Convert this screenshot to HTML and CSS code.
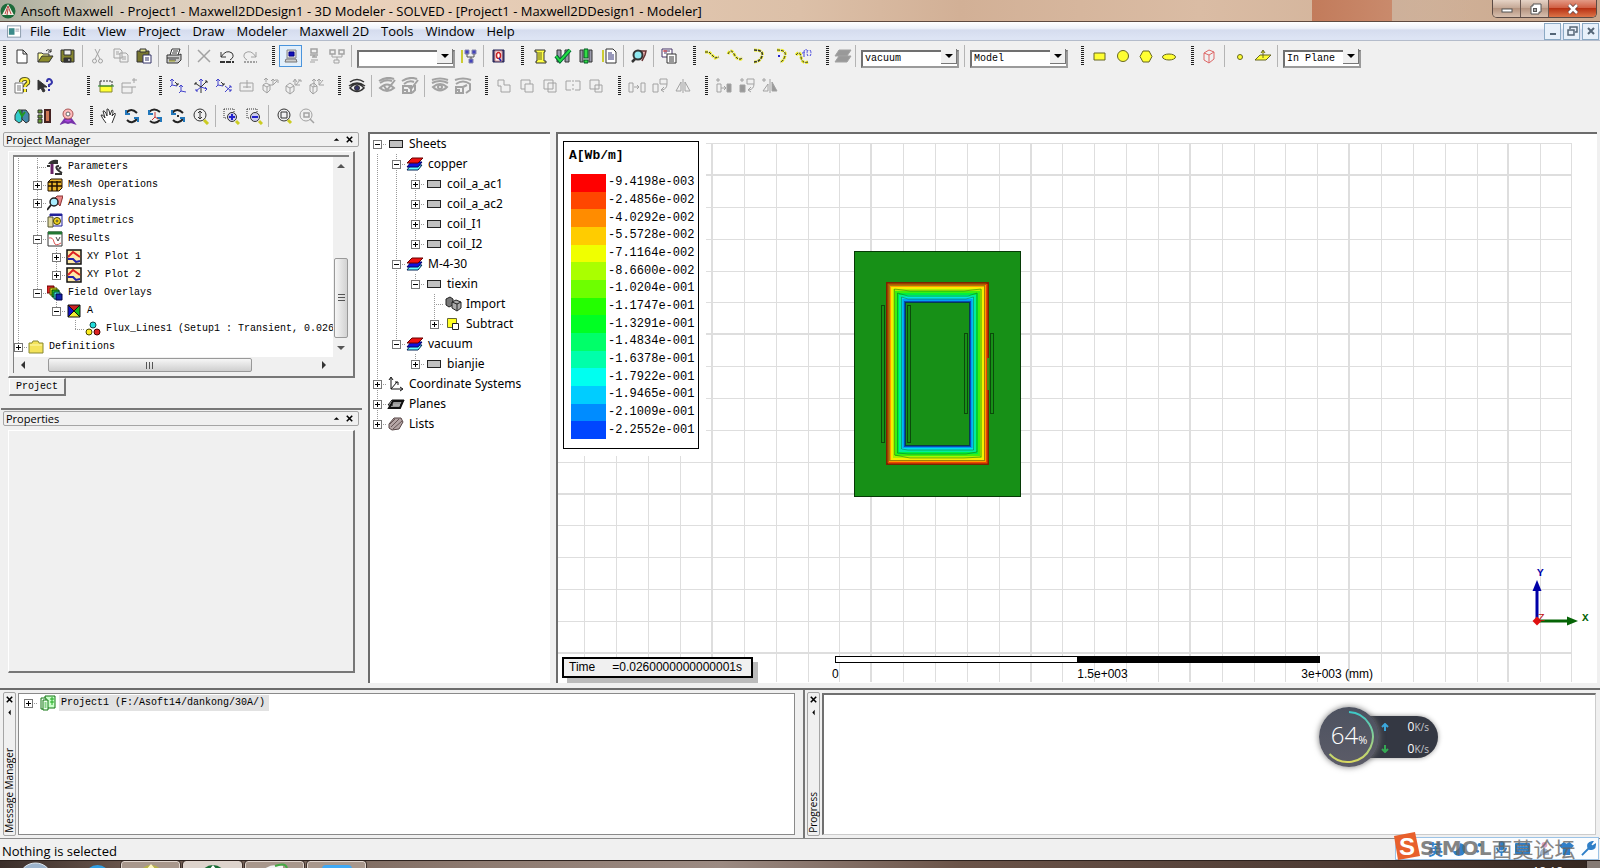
FILE: index.html
```html
<!DOCTYPE html>
<html lang="en">
<head>
<meta charset="utf-8">
<title>Ansoft Maxwell - Project1 - Maxwell2DDesign1 - 3D Modeler</title>
<link rel="stylesheet" href="styles.css">
</head>
<body>
<svg class="defs" aria-hidden="true">
  <symbol id="stack" viewBox="0 0 18 16"><path d="M1 14 5 9H16L12 14z" fill="#6ff" stroke="#025"/><path d="M1 11 5 6H16L12 11z" fill="#11d" stroke="#006"/><path d="M1 7 6 2H17L12 7z" fill="#e11" stroke="#600"/></symbol>
  <symbol id="sheet" viewBox="0 0 18 16"><rect x="2.500" y="4.500" width="13" height="7" fill="#c0c0c0" stroke="#222"/></symbol>
  <symbol id="plot" viewBox="0 0 16 16"><rect x="1" y="1" width="14" height="14" fill="#ffe9a8" stroke="#111" stroke-width="1.500"/><path d="M2 8 7 3 14 8" fill="none" stroke="#d22" stroke-width="2"/><path d="M2 10 7 10 10 13 14 12" fill="none" stroke="#22a" stroke-width="2"/></symbol>
</svg>

<header class="titlebar">
  <svg class="appicon" viewBox="0 0 16 16"><circle cx="8" cy="8" r="7.500" fill="#1c6b3a"/><path d="M8 1 14 12H2z" fill="#f4efe4"/><path d="M8 3 5 11M8 3 11 11M8 6 7 12" stroke="#b44" fill="none"/></svg>
  <h1>Ansoft Maxwell&nbsp; - Project1 - Maxwell2DDesign1 - 3D Modeler - SOLVED - [Project1 - Maxwell2DDesign1 - Modeler]</h1>
  <div class="winctl">
    <button aria-label="Minimize"><svg viewBox="0 0 16 12"><rect x="3" y="6" width="10" height="3" fill="#fff" stroke="#555"/></svg></button>
    <button aria-label="Restore"><svg viewBox="0 0 16 12"><path d="M6 1h8v8h-2v2H4V3h2z" fill="#fff" stroke="#555"/><rect x="6.500" y="5.500" width="3" height="3" fill="#aaa" stroke="#555"/></svg></button>
    <button class="close" aria-label="Close"><svg viewBox="0 0 16 12"><path d="M4 2 12 10M12 2 4 10" stroke="#644" stroke-width="4"/><path d="M4 2 12 10M12 2 4 10" stroke="#fff" stroke-width="2.500"/></svg></button>
  </div>
</header>

<nav class="menubar">
  <svg class="docicon" viewBox="0 0 16 13"><rect x=".5" y=".5" width="14" height="12" fill="#fff" stroke="#89a"/><rect x="2" y="3" width="6" height="7" fill="#3b8a8a"/><path d="M9 4h4M9 6h4" stroke="#99a"/></svg>
  <button>File</button><button>Edit</button><button>View</button><button>Project</button><button>Draw</button><button>Modeler</button><button>Maxwell 2D</button><button>Tools</button><button>Window</button><button>Help</button>
  <div class="mdictl">
    <button aria-label="Minimize child"><svg viewBox="0 0 12 12"><path d="M3 9h6" stroke="#567" stroke-width="2"/></svg></button>
    <button aria-label="Restore child"><svg viewBox="0 0 12 12"><path d="M4 4V2h7v5H9M2 5h6v5H2z" stroke="#567" stroke-width="1.500" fill="none"/></svg></button>
    <button aria-label="Close child"><svg viewBox="0 0 12 12"><path d="M3 3 9 9M9 3 3 9" stroke="#567" stroke-width="2"/></svg></button>
  </div>
</nav>

<section class="toolbars">
  <div class="row">
    <div class="group">
      <button aria-label="New"><svg viewBox="0 0 18 18"><path d="M4 3h6l4 4v9H4zM10 3v4h4" fill="#fff"/></svg></button>
      <button aria-label="Open"><svg viewBox="0 0 18 18"><path d="M2 15V6h4l1 1h6v2" fill="#ffff9a"/><path d="M2 15 6 9h11l-4 6z" fill="#8c8c2c"/><path d="M10 4q3-3 5 1M15 2v3h-3"/></svg></button>
      <button aria-label="Save"><svg viewBox="0 0 18 18"><path d="M2 3h13v12H3l-1-1z" fill="#84842e"/><path d="M5 3h7v5H5z" fill="#eee"/><path d="M5 11h7v4H5z" fill="#333"/><path d="M10 12v2" stroke="#fff"/></svg></button>
      <hr>
      <button class="off" aria-label="Cut"><svg viewBox="0 0 18 18"><path d="M6 2 11 12M11 2 6 12"/><circle cx="5.500" cy="14" r="2"/><circle cx="11.500" cy="14" r="2"/></svg></button>
      <button class="off" aria-label="Copy"><svg viewBox="0 0 18 18"><path d="M2 2h6l2 2v7H2zM4 5h3M4 7h4M8 6h6l2 2v7H8zM10 10h4M10 12h4" fill="#f0f0f0"/></svg></button>
      <button aria-label="Paste"><svg viewBox="0 0 18 18"><path d="M2 4h12v11H2z" fill="#77752f"/><path d="M5 2h6v3H5z" fill="#dd8"/><path d="M8 8h8v8H8z" fill="#fff" stroke="#336"/><path d="M10 11h4M10 13h4" stroke="#336"/></svg></button>
      <hr>
      <button aria-label="Print"><svg viewBox="0 0 18 18"><path d="M5 8 7 2h8l-2 6" fill="#fff"/><path d="M2 8h12l2-1v6l-3 3H2z" fill="#ccc"/><path d="M2 11h12M4 13h7M8 4h5M7 6h5"/><path d="M4 14h6" stroke="#aa2" /></svg></button>
      <hr>
      <button class="off" aria-label="Delete"><svg viewBox="0 0 18 18"><path d="M3 3 15 15M15 3 3 15" stroke-width="1.500"/></svg></button>
      <button aria-label="Undo"><svg viewBox="0 0 18 18"><path d="M3 5v5h5M3 10Q8 2 14 6q3 4-2 7"/><path d="M2 15h14" stroke-dasharray="5 1" stroke-width="2"/></svg></button>
      <button class="off" aria-label="Redo"><svg viewBox="0 0 18 18"><path d="M15 5v5h-5M15 10Q10 2 4 6q-3 4 2 7"/><path d="M3 15h13" stroke-dasharray="2 1" stroke-width="2"/></svg></button>
    </div>
    <div class="group">
      <button class="on" aria-label="Local machine"><svg viewBox="0 0 18 18"><path d="M5 3h9v8H5z" fill="#ddd" stroke="#888"/><path d="M7 5h5v4H7z" fill="#11b" stroke="#008"/><path d="M4 12h10l1 3H3z" fill="#ccc" stroke="#777"/></svg></button>
      <button class="off" aria-label="Remote machine"><svg viewBox="0 0 18 18"><path d="M6 2h6v4H6zM5 8h8M9 8v2M7 10h5" stroke-width="1.500"/><path d="M6 13h7M5 15h5"/></svg></button>
      <button class="off" aria-label="Distributed"><svg viewBox="0 0 18 18"><path d="M2 3h5v4H2zM11 3h5v4h-5z" stroke-width="1.500"/><path d="M4 7v3h10V7M9 10v3M6 13h5v3H6z"/></svg></button>
      <hr>
      <span class="pick"><select aria-label="Queue"><option></option></select></span>
      <button aria-label="Machine list"><svg viewBox="0 0 18 18"><path d="M2 3v13" stroke="#cc3" stroke-width="2"/><path d="M5 3h4v4H5zM12 3h4v4h-4zM9 12h4v4H9z" fill="#44b" stroke="#88a"/><path d="M7 7v3h7V7M11 10v2" stroke="#555"/></svg></button>
      <hr>
      <button aria-label="Queue monitor"><svg viewBox="0 0 18 18"><path d="M3 3h11v12H3z" fill="#447" stroke="#225"/><path d="M5 4h7v10H5z" fill="#fff" stroke="#c88"/><ellipse cx="8.500" cy="8.500" rx="2" ry="3" stroke="#c22" stroke-width="1.500"/><path d="M9 11l2 3" stroke="#22a" stroke-width="1.500"/></svg></button>
    </div>
    <div class="group">
      <button aria-label="Solution data"><svg viewBox="0 0 18 18"><path d="M4 3h10v2h-1v9h2v2H5v-2h1V5H4z" fill="#ff4"/><path d="M7 6h4M7 8h4M7 10h4M7 12h4" stroke="#662"/></svg></button>
      <button aria-label="Validate"><svg viewBox="0 0 18 18"><path d="M3 3h4v12H3zM11 3h4v12h-4z" fill="#99a"/><path d="M2 9 6 14 16 3" stroke="#063" stroke-width="4"/><path d="M2 9 6 14 16 3" stroke="#2d4" stroke-width="2"/></svg></button>
      <button aria-label="Analyze all"><svg viewBox="0 0 18 18"><path d="M3 3h3v12H3zM12 3h3v12h-3z" fill="#99a"/><path d="M7 2h4v9H7zM7 13h4v3H7z" fill="#3d4" stroke="#052"/></svg></button>
      <button aria-label="Edit notes"><svg viewBox="0 0 18 18"><path d="M3 3v12" stroke="#cc3" stroke-width="2"/><path d="M6 2h7l3 3v11H6z" fill="#fff"/><path d="M8 6h4M8 8h6M8 10h6M8 12h6" stroke="#337"/></svg></button>
      <hr>
      <button aria-label="Solve setup"><svg viewBox="0 0 18 18"><path d="M9 4h7l-1 4-3 6" fill="#f6bcbc" stroke="#633" stroke-width="1.500"/><circle cx="8" cy="8" r="4.500" fill="#8fe8f0" stroke-width="2"/><path d="M5 12 2 15" stroke-width="2.500"/></svg></button>
      <hr>
      <button aria-label="Copy image"><svg viewBox="0 0 18 18"><path d="M2 2h10v8H2zM4 4h6M4 6h3" fill="#fff" stroke="#436"/><path d="M7 7h9v9H7zM9 10h5M9 12h5M9 14h5" fill="#fff"/><path d="M3 4h4" stroke="#d33"/></svg></button>
    </div>
    <div class="group curve">
      <button aria-label="Draw line"><svg viewBox="0 0 18 18"><path class="dot" d="M2 5 6 5 12 11 16 10"/><path d="M2 5 6 5 12 11 16 10"/></svg></button>
      <button aria-label="Draw spline"><svg viewBox="0 0 18 18"><path class="dot" d="M2 7Q5 1 8 7T15 12L16 10"/><path d="M2 7Q5 1 8 7T15 12L16 10"/></svg></button>
      <button aria-label="Draw arc"><svg viewBox="0 0 18 18"><path class="dot" d="M5 3Q15 3 13 9T5 15"/><path d="M5 3Q15 3 13 9T5 15" stroke-width="1.500"/></svg></button>
      <button aria-label="Draw centre arc"><svg viewBox="0 0 18 18"><path class="dot" d="M5 3Q15 3 13 9T8 15"/><path d="M5 3Q15 3 13 9T8 15"/><path d="M6 9h2" stroke="#22c" stroke-width="2"/></svg></button>
      <button aria-label="Draw equation curve"><svg viewBox="0 0 18 18"><path class="dot" d="M1 8Q5 3 6 10T13 15"/><path d="M1 8Q5 3 6 10T13 15"/><path d="M9 10V5q0-3 3-2M7 6h4M13 3q-2 3 0 6M15 3q2 3 0 6" stroke="#44d"/></svg></button>
    </div>
    <div class="group">
      <button class="off slim" aria-label="Assign material"><svg viewBox="0 0 18 18"><path d="M1 9 5 3h12l-4 6z" fill="#999"/><path d="M1 15 5 9h12l-4 6z" fill="#999"/></svg></button>
      <hr>
      <span class="pick"><select aria-label="Material"><option>vacuum</option></select></span>
      <hr>
      <span class="pick"><select aria-label="Model type"><option>Model</option></select></span>
    </div>
    <div class="group yellow">
      <button aria-label="Rectangle"><svg viewBox="0 0 18 18"><path d="M3 6h11v7H3z"/></svg></button>
      <button aria-label="Circle"><svg viewBox="0 0 18 18"><circle cx="9" cy="9" r="5.500"/></svg></button>
      <button aria-label="Regular polygon"><svg viewBox="0 0 18 18"><path d="M6 4h6l3 5.500L12 15H6L3 9.500z"/></svg></button>
      <button aria-label="Ellipse"><svg viewBox="0 0 18 18"><ellipse cx="9" cy="10" rx="6.500" ry="3"/></svg></button>
    </div>
    <div class="group yellow">
      <button class="wire" aria-label="Region"><svg viewBox="0 0 18 18"><path d="M3 6 8 3 13 5V12L8 16 3 13zM3 6 8 8 13 5M8 8v8"/></svg></button>
      <hr>
      <button aria-label="Point"><svg viewBox="0 0 18 18"><circle cx="9" cy="10" r="2.500"/></svg></button>
      <button aria-label="Plane"><svg viewBox="0 0 18 18"><path d="M1 13 6 8h11l-5 5z"/><path d="M9 11V4M7 6l2-3 2 3"/></svg></button>
      <hr>
      <span class="pick small"><select aria-label="Movement mode"><option>In Plane</option></select></span>
    </div>
  </div>

  <div class="row">
    <div class="group">
      <button aria-label="Help topics"><svg viewBox="0 0 18 18"><path d="M2 6h8v10H2zM4 9h4M4 11h4M4 13h4" fill="#fff" stroke="#777"/><path d="M8 5q0-3 4-3t3 4q-3 2-3 4M12 12v3" stroke="#552" stroke-width="4"/><path d="M8 5q0-3 4-3t3 4q-3 2-3 4M12 12v3" stroke="#fe3" stroke-width="2"/></svg></button>
      <button aria-label="Context help"><svg viewBox="0 0 18 18"><path d="M2 3v10l3-2 2 4 2-1-2-4h4z" fill="#333"/><path d="M11 5q0-3 2-3t3 3q0 2-3 3v2M13 12v2" stroke="#33a" stroke-width="2"/></svg></button>
    </div>
    <div class="group g20">
      <button aria-label="Section"><svg viewBox="0 0 18 18"><path d="M3 4h12v5" stroke-dasharray="2 1"/><path d="M3 4v5"/><path d="M3 9h12v6H3z" fill="#ff3" stroke="#883"/><path d="M1 9h16" stroke="#282"/></svg></button>
      <button class="off" aria-label="Section add"><svg viewBox="0 0 18 18"><path d="M2 6h9M2 6v4h10v6H2v-6M14 1v5M12 3h5M12 10h4"/></svg></button>
    </div>
    <div class="group g8 blue">
      <button aria-label="Offset origin"><svg viewBox="0 0 18 18"><path d="M3 2v6M1 4l2-2 2 2M3 8l-2 2M3 8l5 1M12 8v6M10 10l2-2 2 2M12 14l-2 2M12 14l5 1"/><path d="M6 5l3 3M9 6v2H7" stroke="#333"/></svg></button>
      <button aria-label="Rotated axis"><svg viewBox="0 0 18 18"><path d="M9 2v9M7 4l2-2 2 2M9 10l-5 4M4 12v2h2M9 10l6 2M13 10l2 2-2 2"/><path d="M9 10 3 6M3 8V6h2M9 10l6-6M13 4h2v2M9 11v5" stroke="#333"/></svg></button>
      <button aria-label="Offset and rotated"><svg viewBox="0 0 18 18"><path d="M3 2v6M1 4l2-2 2 2M3 8l-2 2M3 8l5 1M10 15l6-6M14 9h2v2M10 9l6 5M14 14h2v-2"/><path d="M6 5l3 3M9 6v2H7" stroke="#333"/></svg></button>
      <button class="off" aria-label="Face axis"><svg viewBox="0 0 18 18"><path d="M2 6h13v8H2zM9 3v8M5 10h8"/></svg></button>
      <button class="off" aria-label="Object axis 1"><svg viewBox="0 0 18 18"><path d="M2 8l3-2 4 2v5l-3 3-4-3zM2 8l4 2 3-2M6 10v6M9 8h3M12 8V2M10 4l2-2 2 2M12 8l4-4M14 3h3v3M5 1v4M3 3l2-2 2 2"/></svg></button>
      <button class="off" aria-label="Object axis 2"><svg viewBox="0 0 18 18"><path d="M2 9l4-3 4 3v5l-4 3-4-3zM2 9l4 2 4-2M6 11v6M11 3v5h5M9 5l2-3 2 3M12 8l4-5M14 3h3v2"/></svg></button>
      <button class="off" aria-label="Object axis 3"><svg viewBox="0 0 18 18"><path d="M3 8l4-2 3 3v5l-4 3-3-3zM3 8l3 2 4-1M6 10v7M7 2v8M5 4l2-2 2 2M12 2v6h5M10 4l2-2 2 2M12 8l4-5"/></svg></button>
    </div>
    <div class="group">
      <button aria-label="Show all"><svg viewBox="0 0 18 18"><path d="M2 5Q9 0 16 5M1 9Q9 3 17 9M2 11Q9 3 16 11Q9 18 2 11z" stroke-width="1.500"/><circle cx="9" cy="11" r="2.500" fill="#336"/></svg></button>
      <hr>
      <button class="off bold" aria-label="Hide selection"><svg viewBox="0 0 18 18"><path d="M1 4Q9-1 16 2M2 6Q8 2 14 4M2 11Q9 4 16 11Q9 17 2 11zM6 9l3 4 8-10"/></svg></button>
      <button class="off bold" aria-label="Hide in view"><svg viewBox="0 0 18 18"><path d="M1 4Q9-1 16 2M3 7Q8 3 13 5M2 9h8v7H2zM2 13h4v3M7 9l3 3 7-9M14 8v5l-3 3"/></svg></button>
      <hr>
      <button class="off bold" aria-label="Show selection"><svg viewBox="0 0 18 18"><path d="M1 3Q9 0 17 3M1 6Q9 2 17 6M2 10Q9 4 16 10Q9 17 2 10z"/><circle cx="9" cy="10" r="2"/></svg></button>
      <button class="off bold" aria-label="Show in view"><svg viewBox="0 0 18 18"><path d="M1 3Q9 0 17 3M2 7Q9 2 16 7v6l-4 3M2 10h7v6H2zM2 13h3v3M9 10l4-2"/></svg></button>
    </div>
    <div class="group">
      <button class="off" aria-label="Unite"><svg viewBox="0 0 18 18"><path d="M3 3h6v5h6v7H6V9H3z"/></svg></button>
      <button class="off" aria-label="Subtract"><svg viewBox="0 0 18 18"><path d="M7 12H3V3h9v4M7 7h8v8H7z"/></svg></button>
      <button class="off" aria-label="Intersect"><svg viewBox="0 0 18 18"><path d="M3 3h9v9H3zM7 6h8v9H7z"/></svg></button>
      <button class="off" aria-label="Split"><svg viewBox="0 0 18 18"><path d="M7 4H2v9h5M11 4h5v9h-5"/><path d="M9 3v12" stroke-dasharray="2 2"/></svg></button>
      <button class="off" aria-label="Imprint"><svg viewBox="0 0 18 18"><path d="M3 3h9v9H3zM8 8h7v7H8z"/></svg></button>
    </div>
    <div class="group">
      <button class="off" aria-label="Move"><svg viewBox="0 0 18 18"><path d="M1 6h4v9H1zM13 6h4v9h-4zM6 10h5M9 8l2 2-2 2"/></svg></button>
      <button class="off" aria-label="Rotate"><svg viewBox="0 0 18 18"><path d="M2 7h5v8H2zM9 2h7v5H9zM16 7q0 5-5 6M13 10l-3 3 3 2"/></svg></button>
      <button class="off" aria-label="Mirror"><svg viewBox="0 0 18 18"><path d="M2 14 7 5v9zM9 2v14M11 5l5 9h-5z"/></svg></button>
    </div>
    <div class="group">
      <button class="off" aria-label="Duplicate along line"><svg viewBox="0 0 18 18"><path d="M2 7h4v8H2zM6 11h5M9 9l2 2-2 2M3 1v4M1 3h4"/><path d="M12 7h4v8h-4z" fill="#999"/></svg></button>
      <button class="off" aria-label="Duplicate around axis"><svg viewBox="0 0 18 18"><path d="M2 8h5v7H2z" fill="#999"/><path d="M9 2h7v5H9zM16 7q0 5-5 6M13 10l-3 3 3 2M4 1v4M2 3h4"/></svg></button>
      <button class="off" aria-label="Duplicate mirror"><svg viewBox="0 0 18 18"><path d="M2 14 7 7v7zM9 2v14M3 1v4M1 3h4"/><path d="M11 5l5 9h-5z" fill="#999"/></svg></button>
    </div>
  </div>

  <div class="row">
    <div class="group">
      <button aria-label="Model view"><svg viewBox="0 0 18 18"><path d="M2 8 5 3h4v11l-3 2-4-3z" fill="#3cc"/><path d="M9 3h4l3 4v7l-3 2-4-4z" fill="#48a"/><path d="M6 3l3 6 3-4" stroke="#292" stroke-width="2"/></svg></button>
      <button aria-label="Layers"><svg viewBox="0 0 18 18"><path d="M2 3h4v3H2zM2 8h4v3H2zM2 12h4v4H2z" fill="#693"/><path d="M9 3h5v12H9z" fill="#c75" stroke="#422" stroke-width="2"/></svg></button>
      <button aria-label="Camera"><svg viewBox="0 0 18 18"><path d="M3 16l3-4h6l3 4-3-1-3 1-3-1z" fill="#a4d" stroke="#73a" stroke-width="2"/><circle cx="9" cy="7" r="5" fill="#fbb" stroke="#a55"/><circle cx="9" cy="7" r="2" fill="#fff" stroke="#666"/></svg></button>
    </div>
    <div class="group">
      <button aria-label="Pan"><svg viewBox="0 0 18 18"><path d="M6 16Q2 11 1 8q2-1 4 3L3 4q2-1 4 5L7 2q2-1 3 6l2-5q2 0 0 6l3-3q1 1-1 5l-2 5" fill="#fff"/></svg></button>
      <button class="spin" aria-label="Rotate view"><svg viewBox="0 0 18 18"><path d="M3 6Q8 0 14 6M4 13q5 5 10-1"/><path d="M3 3v4h4M15 15v-4h-4" stroke="#27b"/></svg></button>
      <button class="spin" aria-label="Rotate about axis"><svg viewBox="0 0 18 18"><path d="M3 5Q8 0 14 5M4 14q5 4 10-1"/><path d="M3 3v4h4M15 15v-4h-4" stroke="#27b"/><path d="M9 5v5l-3 3M9 10l3 2" stroke="#c33" stroke-width="1"/></svg></button>
      <button class="spin" aria-label="Rotate about centre"><svg viewBox="0 0 18 18"><path d="M3 6Q8 0 14 6M4 13q5 5 10-1"/><path d="M3 3v4h4M15 15v-4h-4" stroke="#27b"/><path d="M8 9h2" stroke="#333"/></svg></button>
      <button aria-label="Zoom"><svg viewBox="0 0 18 18"><circle cx="8" cy="8" r="6"/><path d="M8 4v8M6 6l2-2 2 2M6 10l2 2 2-2"/><path d="M12 13l4 4" stroke="#cc2" stroke-width="3"/></svg></button>
      <hr>
      <button aria-label="Zoom in"><svg viewBox="0 0 18 18"><path d="M2 2h10v3M2 2v9h3" stroke-dasharray="1 1"/><circle cx="10" cy="10" r="4.500" fill="#cce"/><path d="M7 10h6M10 7v6" stroke="#22c" stroke-width="2"/><path d="M14 14l3 3" stroke="#cc2" stroke-width="3"/></svg></button>
      <button aria-label="Zoom out"><svg viewBox="0 0 18 18"><path d="M2 2h10v3M2 2v9h3" stroke-dasharray="1 1"/><circle cx="10" cy="10" r="4.500" fill="#cce"/><path d="M7 10h6" stroke="#22c" stroke-width="2"/><path d="M14 14l3 3" stroke="#cc2" stroke-width="3"/></svg></button>
      <hr>
      <button aria-label="Fit all"><svg viewBox="0 0 18 18"><circle cx="9" cy="8" r="6"/><path d="M6 5h6v6H6z"/><path d="M13 13l3 3" stroke="#cc2" stroke-width="3"/></svg></button>
      <button class="off" aria-label="Fit selection"><svg viewBox="0 0 18 18"><circle cx="8" cy="8" r="6"/><path d="M6 6h5v4H6zM12 12l4 4" stroke-width="1.500"/></svg></button>
    </div>
  </div>
</section>

<main class="workspace">
  <aside class="left">
    <section class="pane">
      <header class="caption"><h2>Project Manager</h2><button aria-label="Collapse"><svg viewBox="0 0 9 9"><path d="M1 6 4.500 3 8 6z"/></svg></button><button aria-label="Close panel"><svg viewBox="0 0 9 9"><path d="M1 1 8 8M8 1 1 8" stroke="#000" stroke-width="2"/></svg></button></header>
      <div class="raised">
        <div class="sunken">
          <ul class="tree mono">
            <li><i class="v"></i><i class="t"></i><svg viewBox="0 0 16 16"><path d="M5 5v10" stroke="#626" stroke-width="3"/><path d="M1 5Q4 0 11 1v4H1z" fill="#333"/><path d="M0 7h3M8 15h7" stroke="#333" stroke-width="2"/><path d="M12 7q-4 0-2 3l2 2 3 2M14 8l-2 2" stroke="#333" stroke-width="2" fill="none"/></svg><span>Parameters</span></li>
            <li><i class="v"></i><i class="t"><button class="ex plus" aria-label="Expand"></button></i><svg viewBox="0 0 16 16"><path d="M1 5 4 2h11v9l-3 3H1z" fill="#e9b52a" stroke="#210"/><path d="M1 9h14M5 4v10M10 4v10M1 5h13" stroke="#210" stroke-width="1.500"/></svg><span>Mesh Operations</span></li>
            <li><i class="v"></i><i class="t"><button class="ex plus" aria-label="Expand"></button></i><svg viewBox="0 0 16 16"><path d="M7 4 10 1h6l-3 10z" fill="#e88" stroke="#833"/><circle cx="7" cy="7" r="4" fill="#aef" stroke="#222" stroke-width="1.500"/><path d="M4 10 0 15" stroke="#222" stroke-width="2"/></svg><span>Analysis</span></li>
            <li><i class="v"></i><i class="t"></i><svg viewBox="0 0 16 16"><path d="M3 1h12v12H3z" fill="#eef" stroke="#229"/><path d="M3 2h12" stroke="#229" stroke-width="2"/><path d="M1 4h5v10H1z" fill="#dfd8a0" stroke="#553"/><circle cx="10" cy="8" r="3.500" fill="#fd2" stroke="#440"/><circle cx="10" cy="8" r="1" fill="#fff" stroke="#440"/></svg><span>Optimetrics</span></li>
            <li><i class="v"></i><i class="t"><button class="ex" aria-label="Collapse"></button></i><svg viewBox="0 0 16 16"><path d="M1 1h14v14H1z" fill="#fff" stroke="#333"/><path d="M1 2h14" stroke="#273" stroke-width="3"/><path d="M2 7q4-1 5 4t7 1" stroke="#d55" fill="none"/><path d="M9 6l2 4 2-4" stroke="#444" fill="none"/></svg><span>Results</span></li>
            <li><i class="v"></i><i class="v"></i><i class="t"><button class="ex plus" aria-label="Expand"></button></i><svg><use href="#plot"/></svg><span>XY Plot 1</span></li>
            <li><i class="v"></i><i class="v"></i><i class="l"><button class="ex plus" aria-label="Expand"></button></i><svg><use href="#plot"/></svg><span>XY Plot 2</span></li>
            <li><i class="v"></i><i class="l"><button class="ex" aria-label="Collapse"></button></i><svg viewBox="0 0 16 16"><path d="M0 1h7v7H0z" fill="#d22" stroke="#600"/><path d="M3 3h7v7H3z" fill="#dd2" stroke="#550"/><path d="M5 5h7v7H5z" fill="#2b2" stroke="#040"/><path d="M7 7h6v7H7z" fill="#4dd" stroke="#044"/><path d="M9 9h6v6H9z" fill="#12a" stroke="#004"/></svg><span>Field Overlays</span></li>
            <li><i class="v"></i><i></i><i class="l"><button class="ex" aria-label="Collapse"></button></i><svg viewBox="0 0 16 16"><path d="M2 2h12L8 8z" fill="#c22"/><path d="M2 2v12l6-6z" fill="#11c"/><path d="M14 2v12L8 8z" fill="#1b2"/><path d="M2 14h12L8 8z" fill="#ee3"/><path d="M2 2h12v12H2zM2 2l12 12M14 2 2 14" stroke="#111" fill="none"/></svg><span>A</span></li>
            <li><i class="v"></i><i></i><i></i><i class="l"></i><svg viewBox="0 0 16 16"><circle cx="8" cy="4" r="3" fill="#2dd" stroke="#144"/><circle cx="4" cy="11" r="3" fill="#fe2" stroke="#440"/><circle cx="12" cy="11" r="3" fill="#d22" stroke="#400"/></svg><span>Flux_Lines1 (Setup1 : Transient, 0.026</span></li>
            <li><i class="l"><button class="ex plus" aria-label="Expand"></button></i><svg viewBox="0 0 16 16"><path d="M1 4h3l1-2h5l1 2h4v10H1z" fill="#f4e35a" stroke="#883"/><path d="M2 6h12" stroke="#fffbb0"/></svg><span>Definitions</span></li>
          </ul>
          <div class="vbar"><b class="up"></b><b class="thumb"></b><b class="down"></b></div>
          <div class="hbar"><b class="lf"></b><b class="thumb"></b><b class="rt"></b></div>
        </div>
      </div>
      <button class="tab">Project</button>
    </section>
    <section class="pane props">
      <header class="caption"><h2>Properties</h2><button aria-label="Collapse"><svg viewBox="0 0 9 9"><path d="M1 6 4.500 3 8 6z"/></svg></button><button aria-label="Close panel"><svg viewBox="0 0 9 9"><path d="M1 1 8 8M8 1 1 8" stroke="#000" stroke-width="2"/></svg></button></header>
      <div class="raised"></div>
    </section>
  </aside>

  <section class="model">
    <ul class="tree sans">
      <li><i class="first"><button class="ex" aria-label="Collapse"></button></i><svg><use href="#sheet"/></svg><span>Sheets</span></li>
      <li><i class="v"></i><i class="t"><button class="ex" aria-label="Collapse"></button></i><svg><use href="#stack"/></svg><span>copper</span></li>
      <li><i class="v"></i><i class="v"></i><i class="t"><button class="ex plus" aria-label="Expand"></button></i><svg><use href="#sheet"/></svg><span>coil_a_ac1</span></li>
      <li><i class="v"></i><i class="v"></i><i class="t"><button class="ex plus" aria-label="Expand"></button></i><svg><use href="#sheet"/></svg><span>coil_a_ac2</span></li>
      <li><i class="v"></i><i class="v"></i><i class="t"><button class="ex plus" aria-label="Expand"></button></i><svg><use href="#sheet"/></svg><span>coil_I1</span></li>
      <li><i class="v"></i><i class="v"></i><i class="l"><button class="ex plus" aria-label="Expand"></button></i><svg><use href="#sheet"/></svg><span>coil_I2</span></li>
      <li><i class="v"></i><i class="t"><button class="ex" aria-label="Collapse"></button></i><svg><use href="#stack"/></svg><span>M-4-30</span></li>
      <li><i class="v"></i><i class="v"></i><i class="l"><button class="ex" aria-label="Collapse"></button></i><svg><use href="#sheet"/></svg><span>tiexin</span></li>
      <li><i class="v"></i><i class="v"></i><i></i><i class="t"></i><svg viewBox="0 0 18 16"><path d="M2 3 6 1l3 2v6l-4 2-3-2z" fill="#777" stroke="#222"/><path d="M8 6l4-2 5 2v6l-4 3-5-3z" fill="#aaa" stroke="#222"/><path d="M8 6l5 2 4-2M13 8v6" stroke="#222" fill="none"/></svg><span>Import</span></li>
      <li><i class="v"></i><i class="v"></i><i></i><i class="l"><button class="ex plus" aria-label="Expand"></button></i><svg viewBox="0 0 18 16"><path d="M3.500 2.500h9v9h-9z" fill="#ff2" stroke="#663"/><path d="M8.500 7.500h6v6h-6z" fill="#fff" stroke="#222"/></svg><span>Subtract</span></li>
      <li><i class="v"></i><i class="l"><button class="ex" aria-label="Collapse"></button></i><svg><use href="#stack"/></svg><span>vacuum</span></li>
      <li><i class="v"></i><i></i><i class="l"><button class="ex plus" aria-label="Expand"></button></i><svg><use href="#sheet"/></svg><span>bianjie</span></li>
      <li><i class="t"><button class="ex plus" aria-label="Expand"></button></i><svg viewBox="0 0 18 16"><path d="M4 2v11h11M4 13l6-7M2 4l2-3 2 3M13 11l3 2-3 2M8 6h3v3" fill="none" stroke="#111"/></svg><span>Coordinate Systems</span></li>
      <li><i class="t"><button class="ex plus" aria-label="Expand"></button></i><svg viewBox="0 0 18 16"><path d="M2 12 6 5h10l-3 7z" fill="#999" stroke="#111" stroke-width="2"/><path d="M1 9 5 4h12l-3 5z" fill="none" stroke="#111"/><path d="M6 9h7" stroke="#fff"/></svg><span>Planes</span></li>
      <li><i class="l"><button class="ex plus" aria-label="Expand"></button></i><svg viewBox="0 0 18 16"><path d="M2 8 7 2 14 2 16 6 12 13 5 14 2 12z" fill="#b5a5a5" stroke="#544"/><path d="M4 11 12 3M6 13 15 5M3 8 8 3" stroke="#655"/></svg><span>Lists</span></li>
    </ul>
  </section>

  <section class="viewport">
    <svg class="scene" aria-label="Flux line plot">
      <g transform="translate(-558 -134)" fill="none">
        <path stroke="#dedede" d="M584.500 143V682M616.500 143V682M648.500 143V682M680.500 143V682M744.500 143V682M776.500 143V682M808.500 143V682M839.500 143V682M903.500 143V682M935.500 143V682M967.500 143V682M999.500 143V682M1062.500 143V682M1094.500 143V682M1126.500 143V682M1158.500 143V682M1222.500 143V682M1254.500 143V682M1285.500 143V682M1317.500 143V682M1381.500 143V682M1413.500 143V682M1445.500 143V682M1477.500 143V682M1540.500 143V682M1571.500 143V682"/>
        <path stroke="#dedede" d="M558 143.500H1571M558 207.500H1571M558 239.500H1571M558 271.500H1571M558 302.500H1571M558 366.500H1571M558 398.500H1571M558 430.500H1571M558 462.500H1571M558 525.500H1571M558 557.500H1571M558 589.500H1571M558 621.500H1571"/>
        <path stroke="#dedede" stroke-width="2" d="M712 143V682M871 143V682M1031 143V682M1190 143V682M1349 143V682M1508 143V682M558 175H1571M558 334H1571M558 494H1571M558 653H1571"/>
        <path fill="#fff" d="M558 134H706V456H558z"/>
        <rect x="854.500" y="251.500" width="166" height="245" fill="#179017" stroke="#063a06"/>
        <g stroke="#0b4a0b"><rect x="881.500" y="305.500" width="3" height="137"/><rect x="907.500" y="305.500" width="3" height="137"/><rect x="964.500" y="333.500" width="3" height="80"/><rect x="990.500" y="333.500" width="3" height="80"/></g>
        <g stroke-width="2">
          <rect x="887" y="283" width="101" height="181" stroke="#7c2400"/>
          <path d="M888.500 463V284.500H986.500" stroke="#b05a00"/><path d="M986.500 284V462.500H888" stroke="#f04400"/>
          <rect x="890" y="286" width="95" height="175" stroke="#ff9c00"/>
          <rect x="892" y="288" width="91" height="171" stroke="#f4ee00"/>
          <rect x="894" y="290" width="87" height="167" stroke="#a8f400"/>
          <rect x="896" y="292" width="83" height="163" stroke="#3cf010"/>
          <rect x="898" y="294" width="79" height="159" stroke="#00f040"/>
          <rect x="900" y="296" width="75" height="155" stroke="#00ee9c"/>
          <rect x="902" y="298" width="71" height="151" stroke="#00e0e8"/>
          <rect x="903.500" y="300" width="68" height="147" stroke="#00a0f4"/>
          <rect x="905" y="302" width="65" height="144" stroke="#0a4cb4"/>
        </g>
        <path d="M894.500 455V289L910 291H964L981 289V457L964 458H910zM897.500 453V293L908 296H968L977 293V452L966 454H908zM901.500 449V297L908 299H966L973.500 297V450H908z" stroke="#135a10" stroke-opacity=".45"/>
        <rect x="889.500" y="285.500" width="95" height="175" stroke="#135a10" stroke-opacity=".4"/>
        <rect x="905.500" y="302.500" width="64" height="143" stroke="#063a50"/>
        <path d="M988 358V390" stroke="#4a8a10" stroke-width="2"/>
      </g>
    </svg>
    <div class="legend">
      <h3>A[Wb/m]</h3>
      <ol>
        <li class="c1">-9.4198e-003</li><li class="c2">-2.4856e-002</li><li class="c3">-4.0292e-002</li><li class="c4">-5.5728e-002</li><li class="c5">-7.1164e-002</li><li class="c6">-8.6600e-002</li><li class="c7">-1.0204e-001</li><li class="c8">-1.1747e-001</li><li class="c9">-1.3291e-001</li><li class="c10">-1.4834e-001</li><li class="c11">-1.6378e-001</li><li class="c12">-1.7922e-001</li><li class="c13">-1.9465e-001</li><li class="c14">-2.1009e-001</li><li class="c15">-2.2552e-001</li>
      </ol>
    </div>
    <div class="time"><span>Time</span><span>=0.0260000000000001s</span></div>
    <div class="scale"><div class="bar"></div><div class="ticks"><span>0</span><span>1.5e+003</span><span>3e+003 (mm)</span></div></div>
    <svg class="triad" viewBox="0 0 64 68"><path d="M12 54V20" stroke="#0000a8" stroke-width="3"/><path d="M12 13 16.500 24H7.500z" fill="#0000a8"/><path d="M12 54H44" stroke="#066406" stroke-width="3"/><path d="M53 54 42 49.500V58.500z" fill="#066406"/><path d="M12 49.500 16.500 54 12 58.500 7.500 54z" fill="#e01010"/><text x="12" y="9" fill="#0000a8">Y</text><text x="57" y="54" fill="#066406">X</text><text x="13" y="54" class="z" fill="#c01010">Z</text></svg>
  </section>
</main>

<section class="dock">
  <div class="message">
    <header class="side"><button aria-label="Close messages"><svg viewBox="0 0 9 9"><path d="M1 1 8 8M8 1 1 8" stroke="#000" stroke-width="2"/></svg></button><button aria-label="Collapse messages"><svg viewBox="0 0 9 9"><path d="M6 1 3 4.500 6 8z"/></svg></button><h2>Message Manager</h2></header>
    <div class="well"><ul class="tree mono msg"><li><i class="first"><button class="ex plus" aria-label="Expand"></button></i><svg viewBox="0 0 16 16"><path d="M5 1h10v12H5z" fill="#cfc" stroke="#171"/><path d="M1 3h5v11H1z" fill="#fff" stroke="#171"/><path d="M3 5h5v10H3z" fill="#efe" stroke="#171"/><path d="M4.500 8h2M4.500 10h2M4.500 12h2M10 4h4M10 7h4M12 2v8" stroke="#2a2"/></svg><span>Project1 (F:/Asoft14/dankong/30A/)</span></li></ul></div>
  </div>
  <div class="progress">
    <header class="side"><button aria-label="Close progress"><svg viewBox="0 0 9 9"><path d="M1 1 8 8M8 1 1 8" stroke="#000" stroke-width="2"/></svg></button><button aria-label="Collapse progress"><svg viewBox="0 0 9 9"><path d="M6 1 3 4.500 6 8z"/></svg></button><h2>Progress</h2></header>
    <div class="well deep"></div>
  </div>
</section>

<footer class="status">Nothing is selected</footer>

<div class="taskbar">
  <svg class="orb" viewBox="0 0 40 8"><circle cx="20" cy="19" r="17" fill="#9db4cc" stroke="#dfe8f0"/></svg>
  <svg class="orb" viewBox="0 0 40 8"><circle cx="20" cy="17" r="13" fill="#2f9fe4"/></svg>
  <span class="task"><svg viewBox="0 0 40 8"><circle cx="20" cy="16" r="13" fill="#b9b24a"/><path d="M20 2 25 8H15z" fill="#fff8c0"/></svg></span>
  <span class="task active"><svg viewBox="0 0 40 8"><circle cx="20" cy="16" r="13" fill="#176b34"/><path d="M20 3 24 8H16z" fill="#fff"/></svg></span>
  <span class="task"><svg viewBox="0 0 40 8"><path d="M8 8Q16 1 28 4V8z" fill="#f4f4f4"/><path d="M20 4Q30 0 32 6" stroke="#4a4" stroke-width="2" fill="none"/></svg></span>
  <span class="task"><svg viewBox="0 0 40 8"><rect x="5" y="3" width="30" height="10" rx="4" fill="#3fa9f5"/></svg></span>
  <span class="clock">18:18</span>
  <span class="peek"></span>
</div>

<aside class="speed">
  <div class="rates"><p><svg viewBox="0 0 8 8"><path d="M4 8V1M1 4 4 1 7 4" stroke="#3ba7dc"/></svg>0<small>K/s</small></p><p><svg viewBox="0 0 8 8"><path d="M4 0V7M1 4 4 7 7 4" stroke="#35a853"/></svg>0<small>K/s</small></p></div>
  <div class="ball"><svg viewBox="0 0 60 60"><defs><linearGradient id="arc" x1="0" y1="0" x2="0" y2="1"><stop offset="0" stop-color="#3cc8c8"/><stop offset="1" stop-color="#d8d860"/></linearGradient></defs><path d="M30 5A25 25 0 1 1 10.500 47" fill="none" stroke="url(#arc)" stroke-width="2"/></svg><span>64<small>%</small></span></div>
</aside>

<aside class="ime">
  <div class="tools">
    <span>英</span>
    <svg viewBox="0 0 16 16"><path d="M11 2A7 7 0 1 1 3 11Q10 11 11 2z"/></svg>
    <svg viewBox="0 0 16 16"><circle cx="8" cy="4" r="2"/><circle cx="6" cy="11" r="1.500"/></svg>
    <svg viewBox="0 0 16 16"><rect x="5" y="0" width="6" height="10" rx="3"/><path d="M3 7q1 5 5 5t5-5M8 12v4" fill="none" stroke="#2f7fc8" stroke-width="2"/></svg>
    <svg viewBox="0 0 16 16"><rect x="0" y="2" width="16" height="12" rx="1"/><path d="M2 5h12M2 8h12M4 11h8" stroke="#fff" stroke-dasharray="2 1"/></svg>
    <svg viewBox="0 0 16 16"><circle cx="8" cy="4" r="3" fill="#d9a0c0"/><path d="M3 15q0-7 5-7t5 7z" fill="#9fb4d0"/></svg>
    <svg viewBox="0 0 16 16"><path d="M5 1 8 3 11 1 16 5 13 8 12 7V15H4V7L3 8 0 5z"/></svg>
    <svg viewBox="0 0 16 16"><path d="M1 15 8 8M8 8Q6 2 12 1L10 4 12 6 15 4Q15 10 8 8z" stroke="#2f7fc8" stroke-width="2"/></svg>
  </div>
  <div class="mark">SIMOL<span>西莫论坛</span></div>
  <svg class="sogou" viewBox="0 0 28 28"><path d="M1 4 22 0 27 24 5 28z" fill="#e8602c"/><text x="14" y="23">S</text></svg>
</aside>
</body>
</html>
```
FILE: styles.css
```css
* { box-sizing: border-box; }
html, body { height: 100%; }
body {
  margin: 0; min-height: 600px; display: flex; flex-direction: column; overflow: hidden;
  background: #f0f0f0; color: #000; font: 13px/18px "Open Sans", "Noto Sans", sans-serif;
}
button { border: 0; padding: 0; background: none; color: inherit; font: inherit; display: grid; place-items: center; }
h1, h2, h3, ul, ol, p { margin: 0; padding: 0; font: inherit; list-style: none; }
.defs { position: absolute; width: 0; height: 0; }

.titlebar {
  flex: none; height: 22px; display: flex; align-items: center; gap: 5px; border-bottom: 1px solid #5e4a40;
  background: linear-gradient(90deg, transparent 82%, #c27b5b 82%, #c98a6c 87%, #cdb09a 87%, transparent 92%),
    linear-gradient(90deg, #a9ad9d 0, #d9cdbd 8%, #ead2bc 22%, #dcc0a8 50%, #d2b096 60%, #dabca4 75%, #c9a88e 100%);
}
.appicon { width: 16px; height: 16px; }
.titlebar h1 { flex: 1; white-space: nowrap; }
.winctl { align-self: flex-start; display: flex; height: 18px; margin-right: 3px; border: 1px solid #5b4a44; border-top: 0; border-radius: 0 0 5px 5px; overflow: hidden; }
.winctl button { width: 28px; border-right: 1px solid #6b5850; background: linear-gradient(#e6d3c6, #c2a592 50%, #b59480 50%, #d7bfae); }
.winctl .close { width: 47px; border-right: 0; background: linear-gradient(#e39a86, #cf5a3e 50%, #b83214 50%, #dc7448); }
.winctl svg { width: 16px; height: 12px; fill: none; }

.menubar { flex: none; height: 19px; display: flex; align-items: center; gap: 12px; padding-left: 7px; background: linear-gradient(#fff, #eef2fa 35%, #d5dcee 45%, #dde4f4 90%); border-bottom: 1px solid #b4bccb; }
.docicon { width: 15px; height: 13px; margin-right: -4px; }
.mdictl { margin-left: auto; display: flex; gap: 2px; padding-right: 1px; }
.mdictl button { width: 17px; height: 17px; border: 1px solid #8ba9c4; background: #e8f0fa; }
.mdictl svg { width: 12px; height: 12px; }

.toolbars { flex: none; }
.row { height: 30px; display: flex; align-items: center; gap: 11px; padding-left: 3px; }
.group { display: flex; align-items: center; }
.group::before { content: ""; width: 3px; height: 20px; margin-right: 4px; background: repeating-linear-gradient(#222 0 1px, #f0f0f0 1px 2px); }
.g20 { margin-left: 20px; }
.g8 { margin-left: 8px; }
.group button { width: 23px; height: 22px; }
.group .slim { width: 19px; }
.group svg { width: 18px; height: 18px; fill: none; stroke: #333; }
.group .off svg { stroke: #a2a2a2; }
.group .bold svg { stroke-width: 2; }
.group .on { border: 1px solid #4a94dc; background: #e2effb; }
.group hr { width: 1px; height: 22px; margin: 0 3px; border: 0; background: #b4b4b4; }
.curve { margin-left: 2px; }
.curve .dot { stroke: #ee2; stroke-width: 3; }
.curve path { stroke-dasharray: 3 1; }
.yellow svg { fill: #ff3; stroke: #662; }
.yellow .wire svg { fill: none; stroke: #d66; }
.blue svg { stroke: #44c; }
.spin svg { stroke: #222; stroke-width: 2; }
.pick { position: relative; width: 98px; height: 18px; margin: 0 2px; }
.small { width: 78px; }
.pick select { appearance: none; width: 100%; height: 100%; padding: 0 0 0 2px; border: 2px solid; border-color: #707070 #9a9a9a #9a9a9a #707070; border-radius: 0; background: #fff; color: #000; font: 10px/14px "Liberation Mono", monospace; }
.pick::before { content: ""; position: absolute; right: 2px; top: 2px; width: 15px; height: 14px; background: #f0f0f0; border: 1px solid #777; border-width: 0 1px 1px 0; pointer-events: none; }
.pick::after { content: ""; position: absolute; right: 6px; top: 7px; border: 4px solid transparent; border-top-color: #000; border-bottom: 0; pointer-events: none; }

.workspace { flex: 1; min-height: 0; display: grid; grid-template-columns: 361px 182px 1fr; column-gap: 6px; padding: 0 3px 5px 1px; border-bottom: 2px solid #6c6c6c; }
.left { display: flex; flex-direction: column; }
.caption { height: 15px; margin: 1px 3px 0 2px; padding: 0 2px; display: flex; align-items: center; border: 1px solid #a5a5a5; border-radius: 2px; font: 11px/13px "Open Sans", sans-serif; }
.caption h2 { flex: 1; }
.caption button { width: 13px; height: 13px; }
.caption svg, .side svg { width: 7px; height: 7px; }
.pane { padding-bottom: 12px; border-bottom: 2px solid #777; }
.raised { margin: 4px 7px 0 7px; padding: 3px 4px; border: 1px solid #fff; border-right: 2px solid #777; border-bottom: 2px solid #777; }
.sunken { display: grid; grid-template-columns: 1fr 16px; grid-template-rows: 200px 16px; border: 2px solid #808080; border-width: 2px 0 0 1px; overflow: hidden; }
.tab { width: 57px; height: 18px; margin-left: 8px; border: 1px solid #fff; border-right: 2px solid #777; border-bottom: 2px solid #777; font: 10px/14px "Liberation Mono", monospace; }
.props { flex: 1; min-height: 0; display: flex; flex-direction: column; border: 0; padding-bottom: 10px; }
.props .raised { flex: 1; }

.tree { background: #fff; overflow: hidden; white-space: nowrap; }
.tree li { display: flex; align-items: center; }
.tree i { flex: none; position: relative; width: 19px; align-self: stretch; }
.tree .v { background: repeating-linear-gradient(#999 0 1px, transparent 1px 2px) 9px 0 / 1px 100% no-repeat; }
.tree .t { background: repeating-linear-gradient(#999 0 1px, transparent 1px 2px) 9px 0 / 1px 100% no-repeat, repeating-linear-gradient(90deg, #999 0 1px, transparent 1px 2px) 9px 50% / 10px 1px no-repeat; }
.tree .l { background: repeating-linear-gradient(#999 0 1px, transparent 1px 2px) 9px 0 / 1px 50% no-repeat, repeating-linear-gradient(90deg, #999 0 1px, transparent 1px 2px) 9px 50% / 10px 1px no-repeat; }
.tree .first { background: repeating-linear-gradient(90deg, #999 0 1px, transparent 1px 2px) 9px 50% / 10px 1px no-repeat; }
.ex { width: 9px; height: 9px; margin: 5px; border: 1px solid #777; background: linear-gradient(#000, #000) 50% 50% / 5px 1px no-repeat #fff; }
.plus { background: linear-gradient(#000, #000) 50% 50% / 5px 1px no-repeat, linear-gradient(#000, #000) 50% 50% / 1px 5px no-repeat #fff; }
.tree svg { flex: none; width: 16px; height: 16px; }
.mono { font: 10px/18px "Liberation Mono", monospace; }
.mono li { height: 18px; }
.mono span { padding-left: 5px; }
.sunken .tree { padding: 1px 0 0; margin-left: -5px; }
.sans { font: 12px/18px "Noto Sans", sans-serif; }
.sans li { height: 20px; }
.sans .ex { margin-top: 6px; }
.sans svg { width: 18px; }
.sans span { padding-left: 4px; }
.model { margin-top: 1px; border: 2px solid #6c6c6c; border-width: 2px 0 0 2px; background: #fff; overflow: hidden; }
.model .tree { margin-left: -2px; }

.vbar, .hbar { display: flex; align-items: center; justify-content: space-between; background: #f0f0f0; }
.vbar { flex-direction: column; padding: 7px 0; }
.hbar { padding: 0 7px; }
.vbar b, .hbar b { border: 4px solid transparent; }
.vbar .up { border-bottom-color: #555; border-top: 0; }
.vbar .down { border-top-color: #555; border-bottom: 0; }
.hbar .lf { border-right-color: #333; border-left: 0; }
.hbar .rt { border-left-color: #333; border-right: 0; }
.vbar .thumb { width: 14px; height: 80px; margin: auto 0 8px; border: 1px solid #999; border-radius: 2px; background: repeating-linear-gradient(#555 0 1px, transparent 1px 3px) 50% 50% / 7px 8px no-repeat, linear-gradient(90deg, #f6f6f6, #d2d2d2); }
.hbar .thumb { width: 204px; height: 14px; margin: 0 auto 0 23px; border: 1px solid #999; border-radius: 2px; background: repeating-linear-gradient(90deg, #555 0 1px, transparent 1px 3px) 50% 50% / 8px 7px no-repeat, linear-gradient(#f6f6f6, #cfcfcf); }

.viewport { position: relative; margin-top: 1px; overflow: hidden; border: 2px solid #6c6c6c; border-width: 2px 0 0 2px; background: #fff; }
.scene { position: absolute; width: 100%; height: 100%; }
.legend { position: absolute; left: 5px; top: 7px; width: 136px; padding: 5px 0 9px 7px; border: 1px solid #000; background: #fff; font: 12px/17px "Liberation Mono", monospace; }
.legend h3 { padding: 0 0 9px; font-weight: bold; font-size: 13px; margin-left: -2px; line-height: 18px; }
.legend ol { display: grid; grid-template-rows: repeat(15, 1fr); height: 265px; }
.legend li { display: flex; align-items: center; gap: 2px; height: 100%; min-height: 0; }
.legend li::before { content: ""; width: 35px; align-self: stretch; background: var(--c); }
.c1 { --c: #f00; } .c2 { --c: #ff4600; } .c3 { --c: #ff8c00; } .c4 { --c: #ffcc00; } .c5 { --c: #f0ff00; }
.c6 { --c: #aaff00; } .c7 { --c: #6eff00; } .c8 { --c: #23ff00; } .c9 { --c: #00ff23; } .c10 { --c: #00ff69; }
.c11 { --c: #00ffaa; } .c12 { --c: #00fff0; } .c13 { --c: #00cdff; } .c14 { --c: #008cff; } .c15 { --c: #0046ff; }
.time { position: absolute; left: 4px; bottom: 5px; height: 21px; padding: 0 9px 0 5px; display: flex; gap: 17px; align-items: center; border: 2px solid #000; background: #f0f0f0; box-shadow: 5px 5px #bbb; font: 12px/17px "Liberation Sans", sans-serif; }
.scale { position: absolute; left: 277px; bottom: 1px; width: 485px; height: 26px; font: 12px/14px "Liberation Sans", sans-serif; }
.bar { height: 7px; border: 1px solid #000; background: linear-gradient(90deg, #fff 50%, #000 50%); }
.ticks { display: grid; grid-template-columns: 1fr 1fr 1fr; margin: 4px -53px 0 -3px; }
.ticks span:nth-child(2) { text-align: center; padding-right: 50px; margin-left: 50px; }
.ticks span:nth-child(3) { text-align: right; }
.triad { position: absolute; right: 8px; bottom: 48px; width: 64px; height: 68px; font: bold 11px "Liberation Mono", monospace; }
.triad .z { font-weight: normal; }

.dock { flex: none; height: 149px; display: flex; border-bottom: 1px solid #8a8a8a; padding-left: 3px; }
.message { flex: 1 1 802px; display: flex; gap: 2px; padding: 2px 8px 2px 0; border-right: 2px solid #777; }
.progress { flex: 1 1 795px; display: flex; gap: 2px; padding: 2px 4px 2px 2px; }
.side { width: 13px; display: flex; flex-direction: column; align-items: center; border: 1px solid #a5a5a5; border-radius: 2px; padding-bottom: 2px; }
.side button { width: 12px; height: 13px; }
.side h2 { margin-top: auto; writing-mode: vertical-rl; rotate: 180deg; font: 10px/11px "Open Sans", sans-serif; white-space: nowrap; }
.well { flex: 1; margin: 1px 0; background: #fff; border: 1px solid #8a8a8a; }
.deep { border: 2px solid #707070; border-right: 1px solid #ccc; border-bottom: 1px solid #ccc; }
.msg svg { margin-left: 2px; }
.msg span { margin-left: 3px; padding: 0 4px 0 2px; background: #e2e2e2; height: 16px; line-height: 16px; }
.status { flex: none; height: 21px; padding: 2px; line-height: 20px; }

.taskbar { flex: none; height: 8px; overflow: hidden; display: flex; gap: 3px; background: linear-gradient(90deg, #3a2e2a, #6a564c 8%, #8d7a70 30%, #9b8a82 45%, #6a5348 60%, #4c3a33 85%, #33261f); border-top: 1px solid #2c211d; padding-left: 6px; }
.orb, .task { flex: none; width: 59px; height: 8px; }
.orb:nth-child(2) { margin-right: -9px; }
.task { border: 1px solid #e2d6cf; border-bottom: 0; border-radius: 3px 3px 0 0; background: #a8978c; outline: 1px solid #3b2e29; display: grid; justify-content: center; }
.task svg { width: 40px; height: 8px; }
.active { background: #ddd3cc; }
.clock { margin: 3px 20px 0 auto; color: #fff; font-size: 12px; line-height: 16px; }
.peek { width: 14px; background: #857a74; border-left: 1px solid #2c211d; }

.speed { position: absolute; right: 162px; bottom: 101px; width: 119px; height: 60px; display: flex; align-items: center; color: #fff; }
.ball { position: absolute; left: 0; width: 60px; height: 60px; border-radius: 50%; background: linear-gradient(#4d5260, #5c5c68); box-shadow: 0 0 6px #777; display: grid; place-items: center; font-size: 24px; font-weight: 300; }
.ball svg { position: absolute; width: 60px; height: 60px; }
.ball small { font-size: 11px; font-weight: 400; }
.rates { margin-left: 40px; width: 79px; height: 42px; padding: 0 9px 0 22px; border-radius: 0 21px 21px 0; background: #343843; box-shadow: 0 0 5px #999; font-size: 12px; line-height: 21px; }
.rates p { display: flex; justify-content: flex-end; align-items: baseline; }
.rates svg { width: 8px; height: 8px; margin-right: auto; fill: none; stroke-width: 2; align-self: center; }
.rates small { font-size: 10px; color: #c4c6cc; }

.ime { position: absolute; right: 1px; bottom: 8px; width: 204px; height: 23px; border: 1px solid #9cc3e6; background: #fbfdff; }
.sogou { position: absolute; left: -3px; bottom: -1px; width: 28px; height: 28px; overflow: visible; }
.sogou text { font: bold 24px "Liberation Sans", sans-serif; fill: #fff; text-anchor: middle; }
.tools { display: flex; align-items: center; justify-content: space-between; height: 100%; padding: 0 2px 0 32px; color: #2f7fc8; font: bold 15px/20px "Noto Sans CJK SC", sans-serif; }
.tools svg { width: 15px; height: 15px; fill: #2f7fc8; }
.mark { position: absolute; left: 24px; top: 0; display: flex; align-items: center; color: #666; opacity: .8; font: bold 20px/21px "DejaVu Sans", sans-serif; }
.mark span { font: 21px/21px "Noto Sans CJK SC", sans-serif; }
```
